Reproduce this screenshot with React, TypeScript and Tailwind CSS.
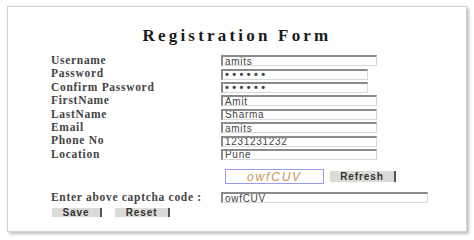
import React from 'react';

const fields = [
  { label: 'Username', value: 'amits', w: 'w-[156px]' },
  { label: 'Password', value: '••••••', w: 'w-[147px]', pw: true },
  { label: 'Confirm Password', value: '••••••', w: 'w-[147px]', pw: true },
  { label: 'FirstName', value: 'Amit', w: 'w-[156px]' },
  { label: 'LastName', value: 'Sharma', w: 'w-[156px]' },
  { label: 'Email', value: 'amits', w: 'w-[156px]' },
  { label: 'Phone No', value: '1231231232', w: 'w-[156px]' },
  { label: 'Location', value: 'Pune', w: 'w-[156px]' },
];

const labelCls =
  "font-['Liberation_Serif',serif] font-bold text-[11.5px] tracking-[0.7px] text-[#444] leading-none";

function Field({ value, w, pw }: { value: string; w: string; pw?: boolean }) {
  return (
    <div
      className={`${w} h-[11px] bg-white border-t-2 border-l-2 border-t-[#8a8a8a] border-l-[#8a8a8a] border-b border-r border-b-[#d8d8d8] border-r-[#d8d8d8] flex items-center pl-[2px] overflow-hidden font-['Liberation_Sans',sans-serif] text-[#444] ${pw ? 'text-[11px] leading-[9px] tracking-[3.4px] font-bold text-[#222]' : 'text-[10px] leading-[9px] tracking-[0.7px]'}`}
    >
      {value}
    </div>
  );
}

function Btn({ children, w }: { children: React.ReactNode; w: string }) {
  return (
    <div
      className={`${w} bg-[#dcdad6] border-r-2 border-r-[#555] flex items-center justify-center font-['Liberation_Sans',sans-serif] font-bold text-[10px] tracking-[0.9px] text-[#333] leading-none`}
    >
      {children}
    </div>
  );
}

export default function App() {
  return (
    <div className="w-[474px] h-[240px] bg-white pt-[6px] pl-[7px]">
      <div className="w-[460px] h-[226px] bg-white border border-[#d0d0d0] shadow-[2px_2px_3px_rgba(0,0,0,0.25)] flex flex-col">
        <h1 className="mt-[20px] text-center font-['Liberation_Serif',serif] font-bold text-[17px] tracking-[3.2px] text-[#1a1a1a] leading-none">
          Registration Form
        </h1>
        <div className="mt-[10px] pl-[43px] flex flex-col">
          {fields.map(f => (
            <div key={f.label} className="h-[13.4px] flex items-center">
              <div className={`w-[170px] ${labelCls}`}>{f.label}</div>
              <Field value={f.value} w={f.w} pw={f.pw} />
            </div>
          ))}
          <div className="mt-[8px] h-[15px] flex items-center pl-[174px] gap-[6px]">
            <div className="w-[99px] h-[15px] border-[1.5px] border-[#9b9bf0] flex items-center justify-center font-['Liberation_Sans',sans-serif] italic text-[12px] tracking-[1.8px] text-[#c8955c] leading-none">
              owfCUV
            </div>
            <Btn w="w-[66px] h-[11px]">Refresh</Btn>
          </div>
          <div className="mt-[8px] h-[11px] flex items-center">
            <div className={`w-[170px] ${labelCls} whitespace-nowrap`}>Enter above captcha code :</div>
            <Field value="owfCUV" w="w-[207px]" />
          </div>
          <div className="mt-[5px] flex gap-[13px] pl-[1px]">
            <Btn w="w-[50px] h-[9px]">Save</Btn>
            <Btn w="w-[55px] h-[9px]">Reset</Btn>
          </div>
        </div>
      </div>
    </div>
  );
}
